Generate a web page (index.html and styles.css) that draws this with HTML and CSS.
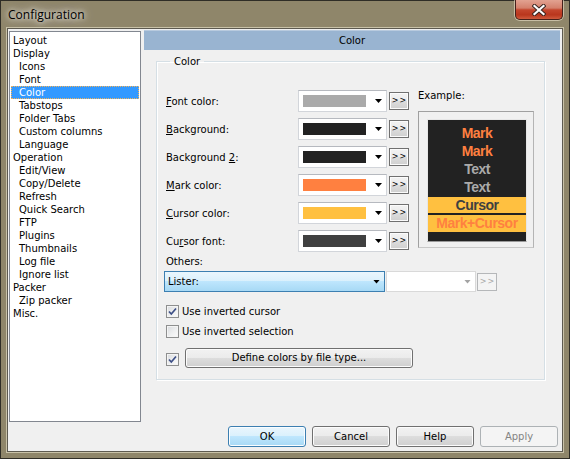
FILE: index.html
```html
<!DOCTYPE html>
<html>
<head>
<meta charset="utf-8">
<title>Configuration</title>
<link rel="stylesheet" href="styles.css">
</head>
<body>
<div class="window">
  <div class="titlebar">
    <span class="title">Configuration</span>
    <div class="close">
      <svg width="14" height="12" viewBox="0 0 14 12">
        <path d="M2.5 2 L11.5 10 M11.5 2 L2.5 10" stroke="#3b2620" stroke-width="4.2" stroke-linecap="square" fill="none"/>
        <path d="M2.5 2 L11.5 10 M11.5 2 L2.5 10" stroke="#ffffff" stroke-width="2.2" stroke-linecap="square" fill="none"/>
      </svg>
    </div>
  </div>
  <div class="client">
    <div class="main">
      <ul class="tree">
        <li class="root">Layout</li>
        <li class="root">Display</li>
        <li class="child">Icons</li>
        <li class="child">Font</li>
        <li class="child selected">Color</li>
        <li class="child">Tabstops</li>
        <li class="child">Folder Tabs</li>
        <li class="child">Custom columns</li>
        <li class="child">Language</li>
        <li class="root">Operation</li>
        <li class="child">Edit/View</li>
        <li class="child">Copy/Delete</li>
        <li class="child">Refresh</li>
        <li class="child">Quick Search</li>
        <li class="child">FTP</li>
        <li class="child">Plugins</li>
        <li class="child">Thumbnails</li>
        <li class="child">Log file</li>
        <li class="child">Ignore list</li>
        <li class="root">Packer</li>
        <li class="child">Zip packer</li>
        <li class="root">Misc.</li>
      </ul>
      <div class="pane">
        <div class="pane-header">Color</div>
        <fieldset class="group">
          <legend>Color</legend>
          <div class="top">
            <div class="colors">
              <div class="crow">
                <span class="clabel"><u>F</u>ont color:</span>
                <div class="combo"><span class="swatch sw-font"></span><span class="arrow"></span></div>
                <span class="more">&gt;&gt;</span>
              </div>
              <div class="crow">
                <span class="clabel"><u>B</u>ackground:</span>
                <div class="combo"><span class="swatch sw-back"></span><span class="arrow"></span></div>
                <span class="more">&gt;&gt;</span>
              </div>
              <div class="crow">
                <span class="clabel">Background <u>2</u>:</span>
                <div class="combo"><span class="swatch sw-back2"></span><span class="arrow"></span></div>
                <span class="more">&gt;&gt;</span>
              </div>
              <div class="crow">
                <span class="clabel"><u>M</u>ark color:</span>
                <div class="combo"><span class="swatch sw-mark"></span><span class="arrow"></span></div>
                <span class="more">&gt;&gt;</span>
              </div>
              <div class="crow">
                <span class="clabel"><u>C</u>ursor color:</span>
                <div class="combo"><span class="swatch sw-cursor"></span><span class="arrow"></span></div>
                <span class="more">&gt;&gt;</span>
              </div>
              <div class="crow">
                <span class="clabel">Cu<u>r</u>sor font:</span>
                <div class="combo"><span class="swatch sw-cfont"></span><span class="arrow"></span></div>
                <span class="more">&gt;&gt;</span>
              </div>
            </div>
            <div class="example">
              <div class="ex-label">Example:</div>
              <div class="ex-frame">
                <div class="ex-box">
                  <div class="ex-row ex-mark">Mark</div>
                  <div class="ex-row ex-mark">Mark</div>
                  <div class="ex-row ex-text">Text</div>
                  <div class="ex-row ex-text">Text</div>
                  <div class="ex-row ex-cursor">Cursor</div>
                  <div class="ex-row ex-markcursor">Mark+Cursor</div>
                </div>
              </div>
            </div>
          </div>
          <div class="others-label">Others:</div>
          <div class="lister-row">
            <div class="lister">Lister:<span class="arrow"></span></div>
            <div class="combo-dis"><span class="arrow arrow-dis"></span></div>
            <span class="more more-dis">&gt;&gt;</span>
          </div>
          <div class="check-row first">
            <span class="cb"><svg width="11" height="11" viewBox="0 0 11 11"><path d="M2 5.5 L4.3 8 L9 2.5" stroke="#3d4f86" stroke-width="1.7" fill="none"/></svg></span>
            <span>Use inverted cursor</span>
          </div>
          <div class="check-row second">
            <span class="cb"></span>
            <span>Use inverted selection</span>
          </div>
          <div class="define-row">
            <span class="cb"><svg width="11" height="11" viewBox="0 0 11 11"><path d="M2 5.5 L4.3 8 L9 2.5" stroke="#3d4f86" stroke-width="1.7" fill="none"/></svg></span>
            <span class="btn define">Define colors by file type...</span>
          </div>
        </fieldset>
      </div>
    </div>
    <div class="buttons">
      <span class="btn btn-default">OK</span>
      <span class="btn">Cancel</span>
      <span class="btn">Help</span>
      <span class="btn btn-disabled">Apply</span>
    </div>
  </div>
</div>
</body>
</html>
```

FILE: styles.css
```css
* { box-sizing: border-box; }
html, body { margin: 0; padding: 0; }
body {
  width: 570px;
  height: 459px;
  overflow: hidden;
  background: #8f866a;
  font-family: "DejaVu Sans", sans-serif;
  font-size: 10px;
  color: #000;
}
.window {
  width: 570px;
  height: 459px;
  display: flex;
  flex-direction: column;
  background: #8f866a;
  border: 1px solid #2f2d26;
  padding: 0 6px 6px 6px;
}
.titlebar {
  height: 27px;
  display: flex;
  align-items: flex-start;
  flex: none;
}
.title {
  font-family: "Open Sans", sans-serif;
  font-size: 12px;
  line-height: 16px;
  margin-top: 6px;
  margin-left: 1px;
  color: #000;
  text-shadow: 0 0 5px rgba(255,255,255,0.9), 0 0 10px rgba(255,255,255,0.7), 0 0 14px rgba(255,255,255,0.5);
}
.close {
  margin-left: auto;
  margin-top: -1px;
  width: 48px;
  height: 20px;
  border: 1px solid #45201a;
  border-top: 0;
  border-radius: 0 0 5px 5px;
  background: linear-gradient(#e2a291 0%, #d4806c 42%, #c4462d 52%, #b9361d 78%, #cf5a3c 100%);
  box-shadow: 0 0 0 1px rgba(236,226,204,0.6);
  display: flex;
  align-items: center;
  justify-content: center;
}
.close svg { display: block; }

.client {
  flex: 1;
  background: #f0f0f0;
  border: 1px solid #5d5a50;
  box-shadow: 0 0 0 1px #c9c2a8;
  padding: 1px 0 4px 1px;
}
.main {
  display: flex;
  align-items: flex-start;
  gap: 3px;
}
.tree {
  list-style: none;
  margin: 1px 0 0 0;
  padding: 2px 0 0 0;
  width: 132px;
  height: 391px;
  border: 1px solid #828790;
  background: #fff;
}
.tree li {
  height: 13px;
  line-height: 13px;
  margin: 0 1px;
  white-space: nowrap;
}
.tree .root { padding-left: 2px; }
.tree .child { padding-left: 8px; }
.tree .selected {
  background: #3399ff;
  color: #fff;
  outline: 1px dotted #f3b35a;
  outline-offset: -1px;
}

.pane { width: 416px; }
.pane-header {
  height: 20px;
  background: #99b4d1;
  text-align: center;
  border-top: 1px solid #b8cade;
  line-height: 19px;
}
.group {
  margin: 5px 0 0 12px;
  width: 389px;
  min-inline-size: 0;
  border: 1px solid #d5dfe5;
  box-shadow: inset 1px 1px 0 #fff, 1px 1px 0 #fff;
  padding: 22px 10px 11px 7px;
}
.group legend {
  padding: 0 4px;
  margin-left: 6px;
  line-height: 13px;
}
.top {
  display: flex;
  gap: 9px;
}
.colors {
  width: 245px;
  display: flex;
  flex-direction: column;
  gap: 6px;
}
.crow {
  height: 22px;
  display: flex;
  align-items: center;
}
.clabel {
  width: 134px;
  padding-left: 2px;
  line-height: 13px;
}
.combo {
  width: 89px;
  height: 22px;
  display: flex;
  align-items: center;
  background: #fff;
  border: 1px solid #d2d5da;
  border-top-color: #b6b9bf;
  padding-left: 4px;
}
.swatch {
  width: 63px;
  height: 12px;
}
.sw-font { background: #aaaaaa; }
.sw-back { background: #222222; }
.sw-back2 { background: #222222; }
.sw-mark { background: #ff8040; }
.sw-cursor { background: #ffc040; }
.sw-cfont { background: #404040; }
.arrow {
  width: 7px;
  height: 4px;
  background: #000;
  clip-path: polygon(0 0, 100% 0, 50% 100%);
  margin-left: auto;
  margin-right: 4px;
}
.arrow-dis { background: #a3a3a3; margin-right: 4px; }
.more {
  width: 20px;
  height: 18px;
  margin-left: 2px;
  border: 1px solid #707070;
  background: linear-gradient(#f2f2f2 0%, #ebebeb 50%, #dddddd 50%, #cfcfcf 100%);
  box-shadow: inset 0 0 0 1px #fbfbfb;
  font-size: 8px;
  line-height: 16px;
  letter-spacing: 1px;
  text-align: center;
  padding-left: 1px;
  color: #000;
}
.more-dis {
  border-color: #b5b7b9;
  background: #f4f4f4;
  box-shadow: none;
  color: #a8a8a8;
  margin-left: 1px;
}

.example {
  width: 116px;
  margin-top: -1px;
}
.ex-label { line-height: 13px; }
.ex-frame {
  margin-top: 9px;
  height: 137px;
  border: 1px solid #a0a0a0;
  border-right-color: #b4b4b4;
  border-bottom-color: #c8c8c8;
  padding: 7px 6px 5px 8px;
}
.ex-box {
  width: 100px;
  height: 123px;
  background: #222222;
  border: 1px solid #e6e6e6;
  border-bottom-color: #9a9a9a;
  padding-top: 4px;
  font-family: "Liberation Sans", Arial, sans-serif;
  font-weight: bold;
  font-size: 14px;
  letter-spacing: -0.5px;
  text-align: center;
}
.ex-row {
  height: 18px;
  line-height: 18px;
}
.ex-mark { color: #ff8040; }
.ex-text { color: #aaaaaa; }
.ex-cursor {
  background: #ffc040;
  color: #404040;
  height: 16px;
  line-height: 16px;
  margin-top: 1px;
  margin-bottom: 2px;
}
.ex-markcursor {
  background: #ffc040;
  color: #ff8040;
  height: 17px;
  line-height: 17px;
}

.others-label {
  margin-top: 3px;
  line-height: 13px;
  padding-left: 2px;
}
.lister-row {
  margin-top: 3px;
  display: flex;
  align-items: center;
  height: 21px;
}
.lister {
  width: 221px;
  height: 21px;
  display: flex;
  align-items: center;
  padding-left: 3px;
  border: 1px solid #3c7fb1;
  background: linear-gradient(#eaf6fd 0%, #d9f0fc 50%, #bee6fd 50%, #a7d9f5 100%);
}
.lister .arrow { margin-right: 4px; }
.combo-dis {
  width: 90px;
  height: 21px;
  display: flex;
  align-items: center;
  border: 1px solid #d9d9d9;
  background: #fff;
  margin-left: 1px;
}
.check-row {
  display: flex;
  align-items: center;
  height: 13px;
  line-height: 13px;
  padding-left: 2px;
  gap: 3px;
}
.check-row.first { margin-top: 13px; }
.check-row.second { margin-top: 7px; }
.cb {
  width: 13px;
  height: 13px;
  flex: none;
  border: 1px solid #8e8f8f;
  background: linear-gradient(135deg, #d8dadd 0%, #eeeff0 55%, #fbfbfb 100%);
  box-shadow: inset 0 0 0 1px #f4f4f4;
  display: flex;
  align-items: center;
  justify-content: center;
}
.cb svg { display: block; }
.define-row {
  margin-top: 10px;
  height: 20px;
  display: flex;
  padding-left: 2px;
  gap: 6px;
}
.define-row .cb { align-self: flex-end; margin-bottom: 2px; }
.btn {
  display: inline-block;
  width: 78px;
  height: 21px;
  line-height: 19px;
  text-align: center;
  border: 1px solid #707070;
  border-radius: 3px;
  background: linear-gradient(#f2f2f2 0%, #ebebeb 50%, #dddddd 50%, #cfcfcf 100%);
  box-shadow: inset 0 0 0 1px #fcfcfc;
  color: #000;
}
.btn.define {
  width: 228px;
  height: 20px;
  line-height: 18px;
}
.buttons {
  margin-top: 4px;
  margin-right: 4px;
  display: flex;
  justify-content: flex-end;
  gap: 6px;
}
.btn-default {
  border-color: #3c7fb1;
  background: linear-gradient(#eaf6fd 0%, #d9f0fc 50%, #bee6fd 50%, #a7d9f5 100%);
  box-shadow: inset 0 0 0 1px #fafdff;
}
.btn-disabled {
  border-color: #adb2b5;
  background: #f4f4f4;
  box-shadow: none;
  color: #838383;
}
```
